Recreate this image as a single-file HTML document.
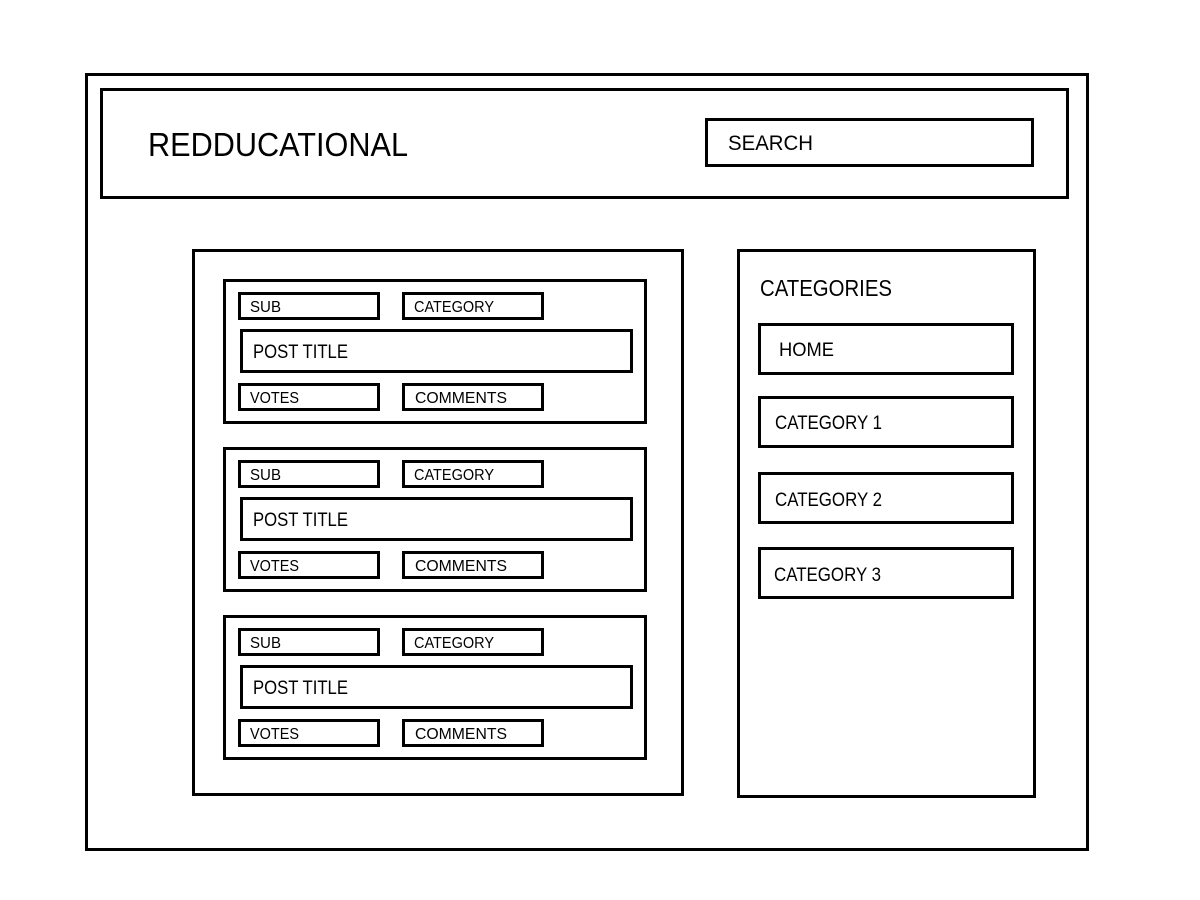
<!DOCTYPE html>
<html><head><meta charset="utf-8"><style>html,body{margin:0;padding:0;background:#fff;width:1200px;height:900px;overflow:hidden}svg{display:block}text{font-family:"Liberation Sans",sans-serif;fill:#000}</style></head>
<body>
<svg width="1200" height="900" viewBox="0 0 1200 900" xmlns="http://www.w3.org/2000/svg">
<g fill="none" stroke="#000" stroke-width="3">
<rect x="86.5" y="74.5" width="1001" height="775"/>
<rect x="101.5" y="89.5" width="966" height="108"/>
<rect x="706.5" y="119.5" width="326" height="46"/>
<rect x="193.5" y="250.5" width="489" height="544"/>
<rect x="738.5" y="250.5" width="296" height="546"/>
<rect x="759.5" y="324.5" width="253" height="49"/>
<rect x="759.5" y="397.5" width="253" height="49"/>
<rect x="759.5" y="473.5" width="253" height="49"/>
<rect x="759.5" y="548.5" width="253" height="49"/>
<g id="c">
<rect x="224.5" y="280.5" width="421" height="142"/>
<rect x="239.5" y="293.5" width="139" height="25"/>
<rect x="403.5" y="293.5" width="139" height="25"/>
<rect x="241.5" y="330.5" width="390" height="41"/>
<rect x="239.5" y="384.5" width="139" height="25"/>
<rect x="403.5" y="384.5" width="139" height="25"/>
</g>
<use href="#c" y="168"/>
<use href="#c" y="336"/>
</g>
<text x="148" y="156" font-size="33" textLength="260" lengthAdjust="spacingAndGlyphs">REDDUCATIONAL</text>
<text x="728" y="150" font-size="21" textLength="85" lengthAdjust="spacingAndGlyphs">SEARCH</text>
<text x="760" y="296" font-size="23" textLength="132" lengthAdjust="spacingAndGlyphs">CATEGORIES</text>
<text x="779" y="356" font-size="19" textLength="55" lengthAdjust="spacingAndGlyphs">HOME</text>
<text x="775" y="429" font-size="19" textLength="107" lengthAdjust="spacingAndGlyphs">CATEGORY 1</text>
<text x="775" y="506" font-size="19" textLength="107" lengthAdjust="spacingAndGlyphs">CATEGORY 2</text>
<text x="774" y="581" font-size="19" textLength="107" lengthAdjust="spacingAndGlyphs">CATEGORY 3</text>
<g id="t">
<text x="250" y="312" font-size="16" textLength="31" lengthAdjust="spacingAndGlyphs">SUB</text>
<text x="414" y="312" font-size="16" textLength="80" lengthAdjust="spacingAndGlyphs">CATEGORY</text>
<text x="253" y="358" font-size="19" textLength="95" lengthAdjust="spacingAndGlyphs">POST TITLE</text>
<text x="250" y="403" font-size="16" textLength="49" lengthAdjust="spacingAndGlyphs">VOTES</text>
<text x="415" y="403" font-size="16" textLength="92" lengthAdjust="spacingAndGlyphs">COMMENTS</text>
</g>
<use href="#t" y="168"/>
<use href="#t" y="336"/>
</svg>
</body></html>
